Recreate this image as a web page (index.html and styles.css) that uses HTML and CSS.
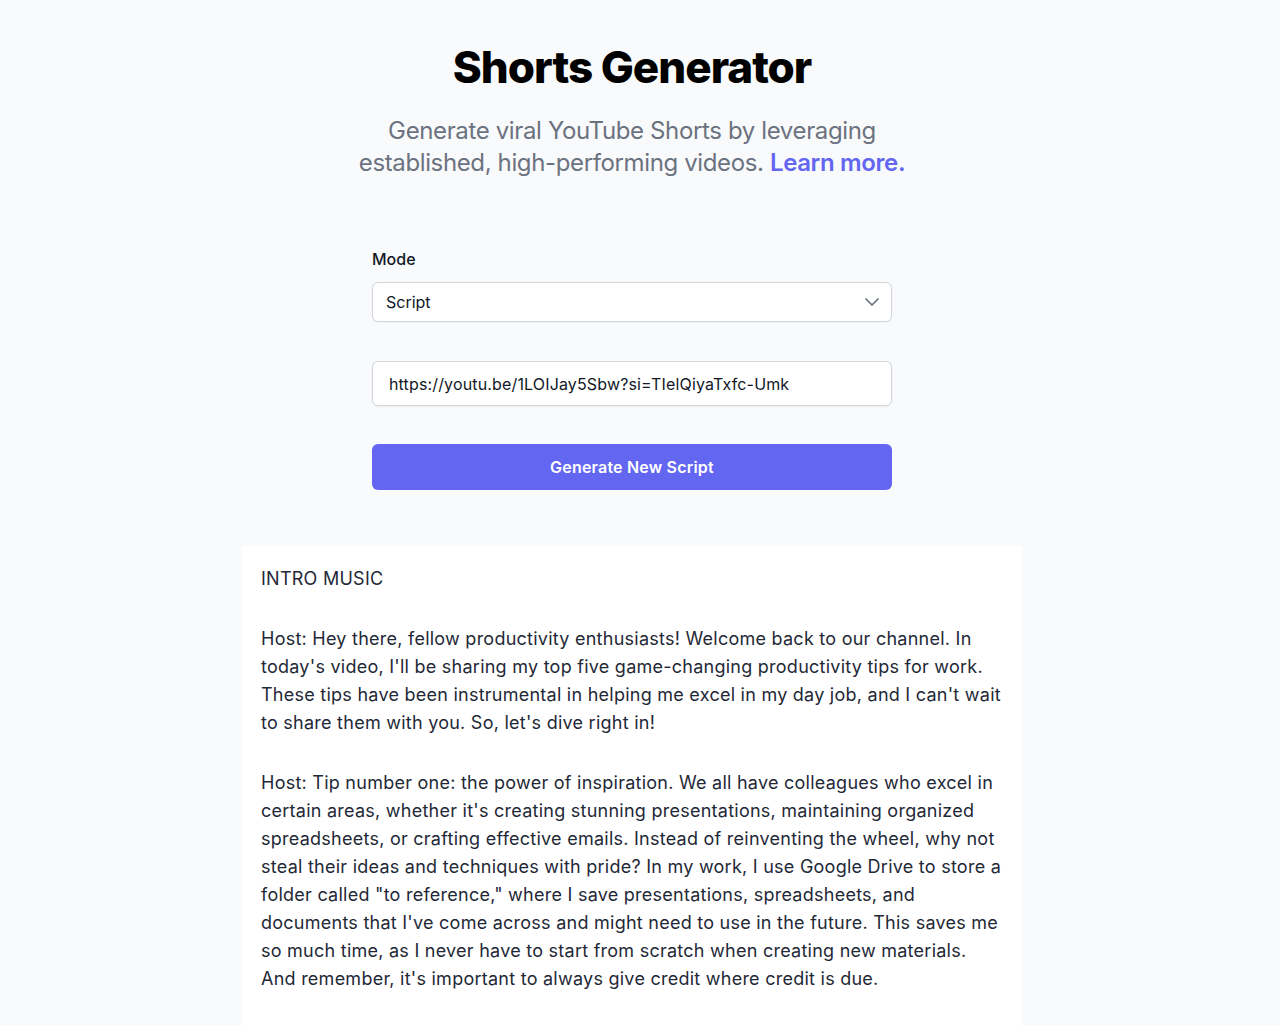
FILE: index.html
```html
<!DOCTYPE html>
<html lang="en">
<head>
  <meta charset="UTF-8">
  <meta name="viewport" content="width=device-width, initial-scale=1.0">
  <title>Shorts Generator</title>
  <link rel="stylesheet" href="styles.css">
</head>
<body>

  <div class="page">
    <header class="hero">
      <h1 class="title">Shorts Generator</h1>
      <p class="subtitle">Generate viral YouTube Shorts by leveraging established, high-performing videos. <a href="#" class="learn-more">Learn more.</a></p>
    </header>

    <form class="generator" onsubmit="return false;">
      <label class="field-label" for="mode">Mode</label>
      <div class="select-wrap">
        <select id="mode" class="select">
          <option>Script</option>
          <option>Clips</option>
        </select>
        <svg class="chevron" width="24" height="24" viewBox="0 0 24 24" fill="none">
          <path d="M6 9l6 6 6-6" stroke="#6b7280" stroke-width="1.75" stroke-linecap="round" stroke-linejoin="round"/>
        </svg>
      </div>

      <input class="url-input" type="text" value="https://youtu.be/1LOIJay5Sbw?si=TIelQiyaTxfc-Umk">

      <button class="generate-button" type="submit">Generate New Script</button>
    </form>

    <div class="script-output">
      <p>INTRO MUSIC</p>
      <p>Host: Hey there, fellow productivity enthusiasts! Welcome back to our channel. In today's video, I'll be sharing my top five game-changing productivity tips for work. These tips have been instrumental in helping me excel in my day job, and I can't wait to share them with you. So, let's dive right in!</p>
      <p>Host: Tip number one: the power of inspiration. We all have colleagues who excel in certain areas, whether it's creating stunning presentations, maintaining organized spreadsheets, or crafting effective emails. Instead of reinventing the wheel, why not steal their ideas and techniques with pride? In my work, I use Google Drive to store a folder called "to reference," where I save presentations, spreadsheets, and documents that I've come across and might need to use in the future. This saves me so much time, as I never have to start from scratch when creating new materials. And remember, it's important to always give credit where credit is due.</p>
      <p>Host: Tip number two: time blocking. Instead of jumping between tasks all day, I group similar work together and give each block a clear start and end time.</p>
    </div>
  </div>

</body>
</html>
```

FILE: styles.css
```css
body {
  font-family: Inter, "Noto Sans", sans-serif;
  background-color: #f9fafb;
  color: #111827;
  margin: 0;
  padding: 0;
}

.page {
  margin-right: 16px;
  padding-top: 43px;
  display: flex;
  flex-direction: column;
  align-items: center;
}

.hero {
  text-align: center;
  max-width: 576px;
}

.title {
  margin: 0;
  font-size: 44px;
  line-height: 48px;
  font-weight: 800;
  letter-spacing: -1px;
  color: #000;
}

.subtitle {
  margin: 24px 0 0;
  font-size: 24px;
  line-height: 32px;
  letter-spacing: -0.37px;
  color: #6b7280;
}

.learn-more {
  color: #6366f1;
  font-weight: 600;
  text-decoration: none;
}

.generator {
  width: 520px;
  margin-top: 68px;
  display: flex;
  flex-direction: column;
}

.field-label {
  font-size: 16px;
  line-height: 24px;
  font-weight: 500;
  color: #111827;
}

.select-wrap {
  position: relative;
  margin-top: 11px;
}

.select {
  width: 100%;
  height: 40px;
  appearance: none;
  -webkit-appearance: none;
  background-color: white;
  border: 1px solid #d1d5db;
  border-radius: 6px;
  padding: 0 40px 0 13px;
  font-family: inherit;
  font-size: 16px;
  color: #111827;
  box-shadow: 0 1px 2px rgba(0, 0, 0, 0.04);
}

.chevron {
  position: absolute;
  right: 8px;
  top: 8px;
  pointer-events: none;
}

.url-input {
  box-sizing: border-box;
  width: 100%;
  height: 45px;
  margin-top: 39px;
  background-color: white;
  border: 1px solid #d1d5db;
  border-radius: 6px;
  padding: 0 16px;
  font-family: inherit;
  font-size: 16px;
  letter-spacing: 0.15px;
  color: #111827;
  box-shadow: 0 1px 2px rgba(0, 0, 0, 0.05);
}

.generate-button {
  height: 46px;
  margin-top: 38px;
  background-color: #6366f1;
  color: white;
  border: none;
  border-radius: 6px;
  font-family: inherit;
  font-size: 16px;
  font-weight: 600;
  letter-spacing: 0.2px;
  cursor: pointer;
}

.script-output {
  box-sizing: border-box;
  width: 780px;
  margin-top: 56px;
  padding: 19px 19px 40px;
  background-color: white;
  font-size: 18px;
  line-height: 28px;
  letter-spacing: 0.25px;
  color: #1f2937;
}

.script-output p {
  margin: 0 0 32px;
}
```
